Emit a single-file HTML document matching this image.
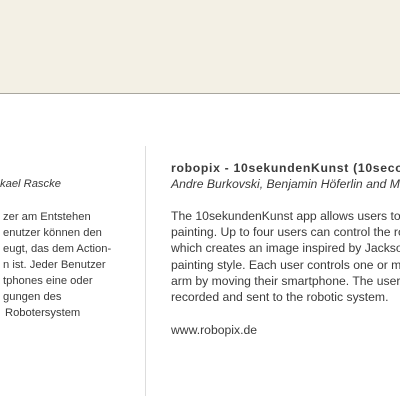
<!DOCTYPE html>
<html><head><meta charset="utf-8"><style>
html,body{margin:0;padding:0;width:400px;height:400px;overflow:hidden;background:#fff;font-family:"Liberation Sans",sans-serif;color:#3a3a3a}
.wrap{position:absolute;left:0;top:0;width:400px;height:400px;overflow:hidden}
.top{position:absolute;left:0;top:0;width:400px;height:93px;background:#f3f0e5;border-bottom:1px solid #a8a69e}
.div{position:absolute;left:145px;top:146px;width:1px;height:250px;background:#ddd}
.t{position:absolute;white-space:nowrap;font-size:11.2px;line-height:16px}
.l{left:3px}
.r{left:171px;font-size:12.2px}
i{font-style:italic}
</style></head><body><div class="wrap">
<div class="top"></div>
<div class="div"></div>
<div class="t l" style="top:176px;left:0"><i>kael Rascke</i></div>
<div class="t l" style="top:209px">zer am Entstehen</div>
<div class="t l" style="top:225px">enutzer können den</div>
<div class="t l" style="top:241px">eugt, das dem Action-</div>
<div class="t l" style="top:257px">n ist. Jeder Benutzer</div>
<div class="t l" style="top:273px">tphones eine oder</div>
<div class="t l" style="top:289px">gungen des</div>
<div class="t l" style="top:305px;left:5px">Robotersystem</div>
<div class="t r" style="top:160px;font-weight:bold;letter-spacing:0.7px">robopix - 10sekundenKunst (10seconds art)</div>
<div class="t r" style="top:176px"><i>Andre Burkovski, Benjamin Höferlin and Michael Rascke</i></div>
<div class="t r" style="top:208px">The 10sekundenKunst app allows users to take part in</div>
<div class="t r" style="top:224px">painting. Up to four users can control the robotic arm</div>
<div class="t r" style="top:240px">which creates an image inspired by Jackson Pollock</div>
<div class="t r" style="top:257px">painting style. Each user controls one or more</div>
<div class="t r" style="top:273px">arm by moving their smartphone. The user movements are</div>
<div class="t r" style="top:289px">recorded and sent to the robotic system.</div>
<div class="t r" style="top:322px">www.robopix.de</div>
</div></body></html>
